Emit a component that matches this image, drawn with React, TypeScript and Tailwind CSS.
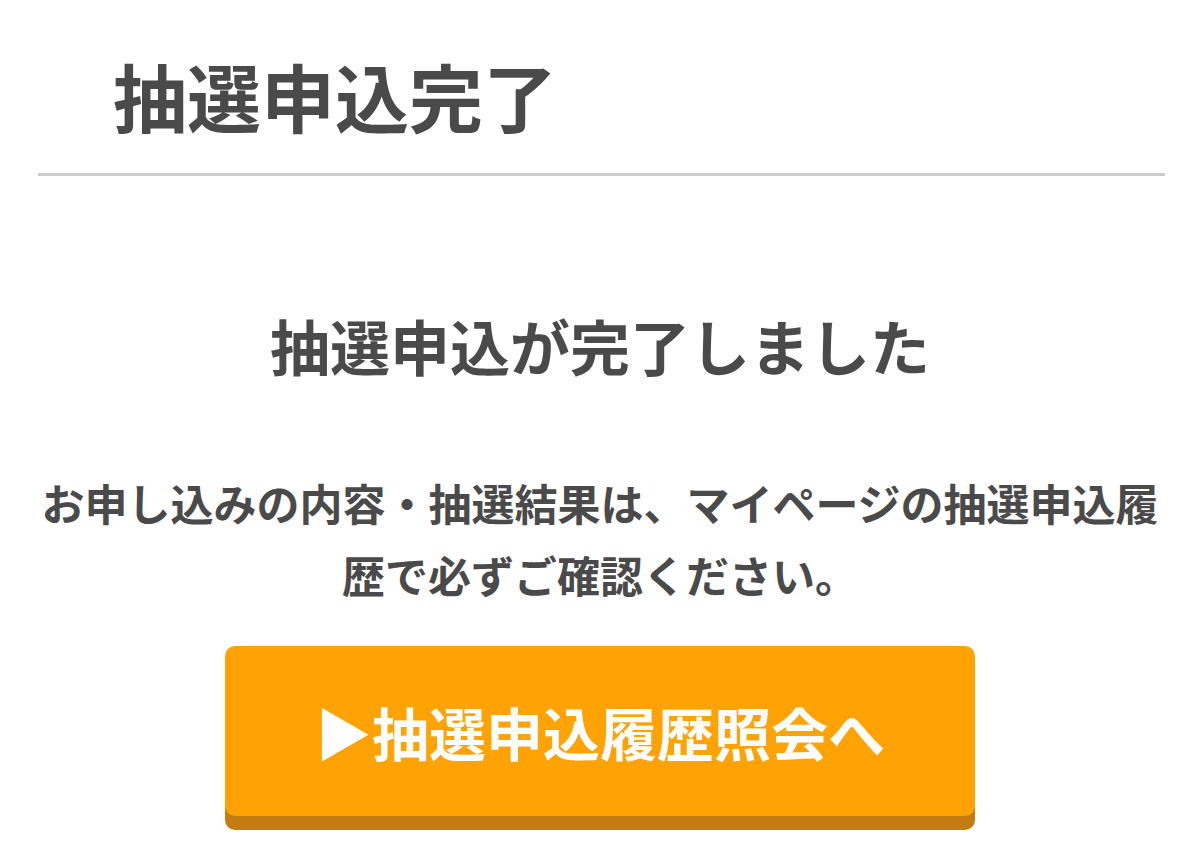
import React from 'react'

const App: React.FC = () => {
    return (
        <div
            className="w-[1200px] h-[863px] bg-white overflow-hidden text-[#4a4a4a] font-bold"
            style={{ fontFamily: '"Noto Sans CJK JP", "Noto Sans", sans-serif' }}
        >
            <h1 className="pt-[58px] pl-[113px] text-[74px] leading-[74px] font-bold">
                抽選申込完了
            </h1>
            <div className="ml-[38px] mr-[35px] mt-[41px] h-[3px] bg-[#cccccc]" />

            <section className="px-[38px] text-center">
                <h2 className="mt-[139px] text-[60px] leading-[60px] font-bold">
                    抽選申込が完了しました
                </h2>
                <p className="mt-[91px] text-[43px] leading-[72px]">
                    お申し込みの内容・抽選結果は、マイページの抽選申込履歴で必ずご確認ください。
                </p>
                <div className="mt-[36px] flex justify-center">
                    <button className="w-[750px] h-[170px] rounded-[10px] bg-[#ffa305] text-white text-[57px] leading-none font-bold shadow-[0_14px_0_#c27c12] flex items-center justify-center">
                        ▶抽選申込履歴照会へ
                    </button>
                </div>
            </section>
        </div>
    )
}

export default App
